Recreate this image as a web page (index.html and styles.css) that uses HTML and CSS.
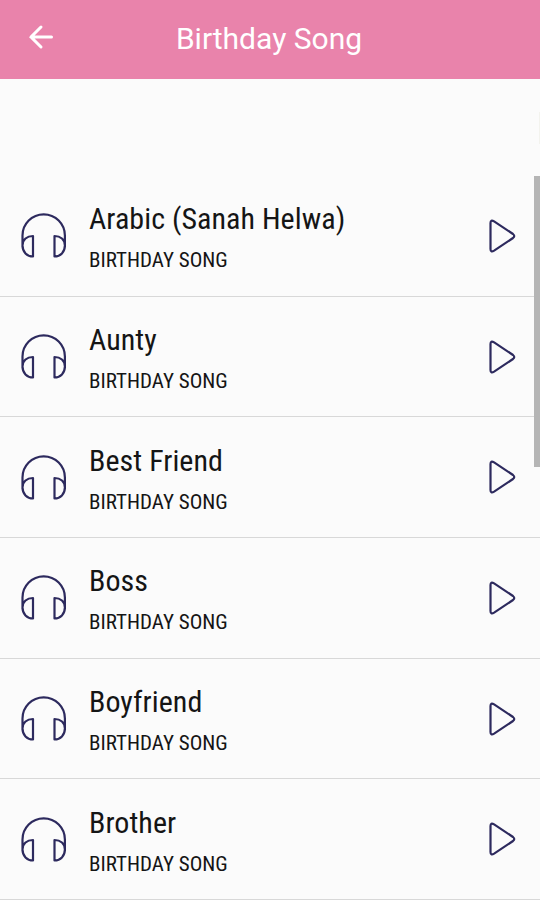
FILE: index.html
```html
<!DOCTYPE html>
<html lang="en">
<head>
<meta charset="utf-8">
<title>Birthday Song</title>
<link rel="stylesheet" href="styles.css">
</head>
<body>
<svg class="defs" aria-hidden="true">
  <symbol id="headphones" viewBox="0 0 48 48"><path d="M2.500 36V24.500a21.200 21.200 0 0 1 42.400 0V36M2.500 34.500C2.500 28.500 7 25 13 25V45.500C7 45.500 2.500 41 2.500 34.500M44.900 34.500C44.900 28.500 40.500 25 34.500 25V45.500C40.500 45.500 44.900 41 44.900 34.500"/></symbol>
  <symbol id="play" viewBox="0 0 30 36"><path d="M3.500 5v26q0 3.800 3.600 1.600L26 20q2.500-2 0-4L7.100 3.400Q3.500 1.200 3.500 5z"/></symbol>
</svg>
<header class="bar">
  <svg class="back" viewBox="0 0 26 26"><path d="M23.500 13H3M13 3 3 13 13 23"/></svg>
  <h1 class="heading">Birthday Song</h1>
</header>
<main class="list">
  <article class="row"><svg class="phones"><use href="#headphones"/></svg><div class="text"><h2 class="title">Arabic (Sanah Helwa)</h2><p class="sub">BIRTHDAY SONG</p></div><svg class="play"><use href="#play"/></svg></article>
  <article class="row"><svg class="phones"><use href="#headphones"/></svg><div class="text"><h2 class="title">Aunty</h2><p class="sub">BIRTHDAY SONG</p></div><svg class="play"><use href="#play"/></svg></article>
  <article class="row"><svg class="phones"><use href="#headphones"/></svg><div class="text"><h2 class="title">Best Friend</h2><p class="sub">BIRTHDAY SONG</p></div><svg class="play"><use href="#play"/></svg></article>
  <article class="row"><svg class="phones"><use href="#headphones"/></svg><div class="text"><h2 class="title">Boss</h2><p class="sub">BIRTHDAY SONG</p></div><svg class="play"><use href="#play"/></svg></article>
  <article class="row"><svg class="phones"><use href="#headphones"/></svg><div class="text"><h2 class="title">Boyfriend</h2><p class="sub">BIRTHDAY SONG</p></div><svg class="play"><use href="#play"/></svg></article>
  <article class="row"><svg class="phones"><use href="#headphones"/></svg><div class="text"><h2 class="title">Brother</h2><p class="sub">BIRTHDAY SONG</p></div><svg class="play"><use href="#play"/></svg></article>
</main>
<div class="edge"></div>
<div class="scroll"></div>
</body>
</html>
```
FILE: styles.css
```css
* { box-sizing: border-box; margin: 0; }
body { height: 900px; overflow: hidden; position: relative; background: #fbfbfb; font-family: Roboto, sans-serif; color: #151515; }
.defs { position: absolute; width: 0; height: 0; }
.bar { display: grid; grid-template-columns: 60px 1fr 62px; align-items: center; height: 79px; padding-bottom: 3px; background: #e983ab; color: #fff; }
.back { width: 26px; height: 26px; margin: -2px 0 0 28px; fill: none; stroke: #fff; stroke-width: 3; stroke-linecap: round; }
.heading { font-size: 30px; font-weight: 400; text-align: center; white-space: nowrap; }
.list { padding-top: 97px; }
.row { display: flex; align-items: center; height: 120.7px; padding: 0 23px 0 20px; border-bottom: 1.5px solid #d8d8d8; }
.phones { width: 48px; height: 48px; margin: -1px 21px 0 0; fill: none; stroke: #2d2a5e; stroke-width: 2.2; stroke-linejoin: round; }
.text { flex: 1; padding-top: 9px; }
.title { font-family: "Roboto Condensed", Roboto, sans-serif; font-stretch: 75%; font-size: 30px; letter-spacing: 0.05px; line-height: 40px; font-weight: 400; white-space: nowrap; }
.sub { font-family: "Roboto Condensed", Roboto, sans-serif; font-stretch: 75%; font-size: 21px; line-height: 42px; }
.play { width: 30px; height: 36px; fill: none; stroke: #2d2a5e; stroke-width: 2.2; }
.edge { position: absolute; right: 0; top: 112px; width: 1px; height: 32px; background: #f3f3ee; }
.scroll { position: absolute; right: 0; top: 176px; width: 6px; height: 291px; background: #b5b5b5; }
```
